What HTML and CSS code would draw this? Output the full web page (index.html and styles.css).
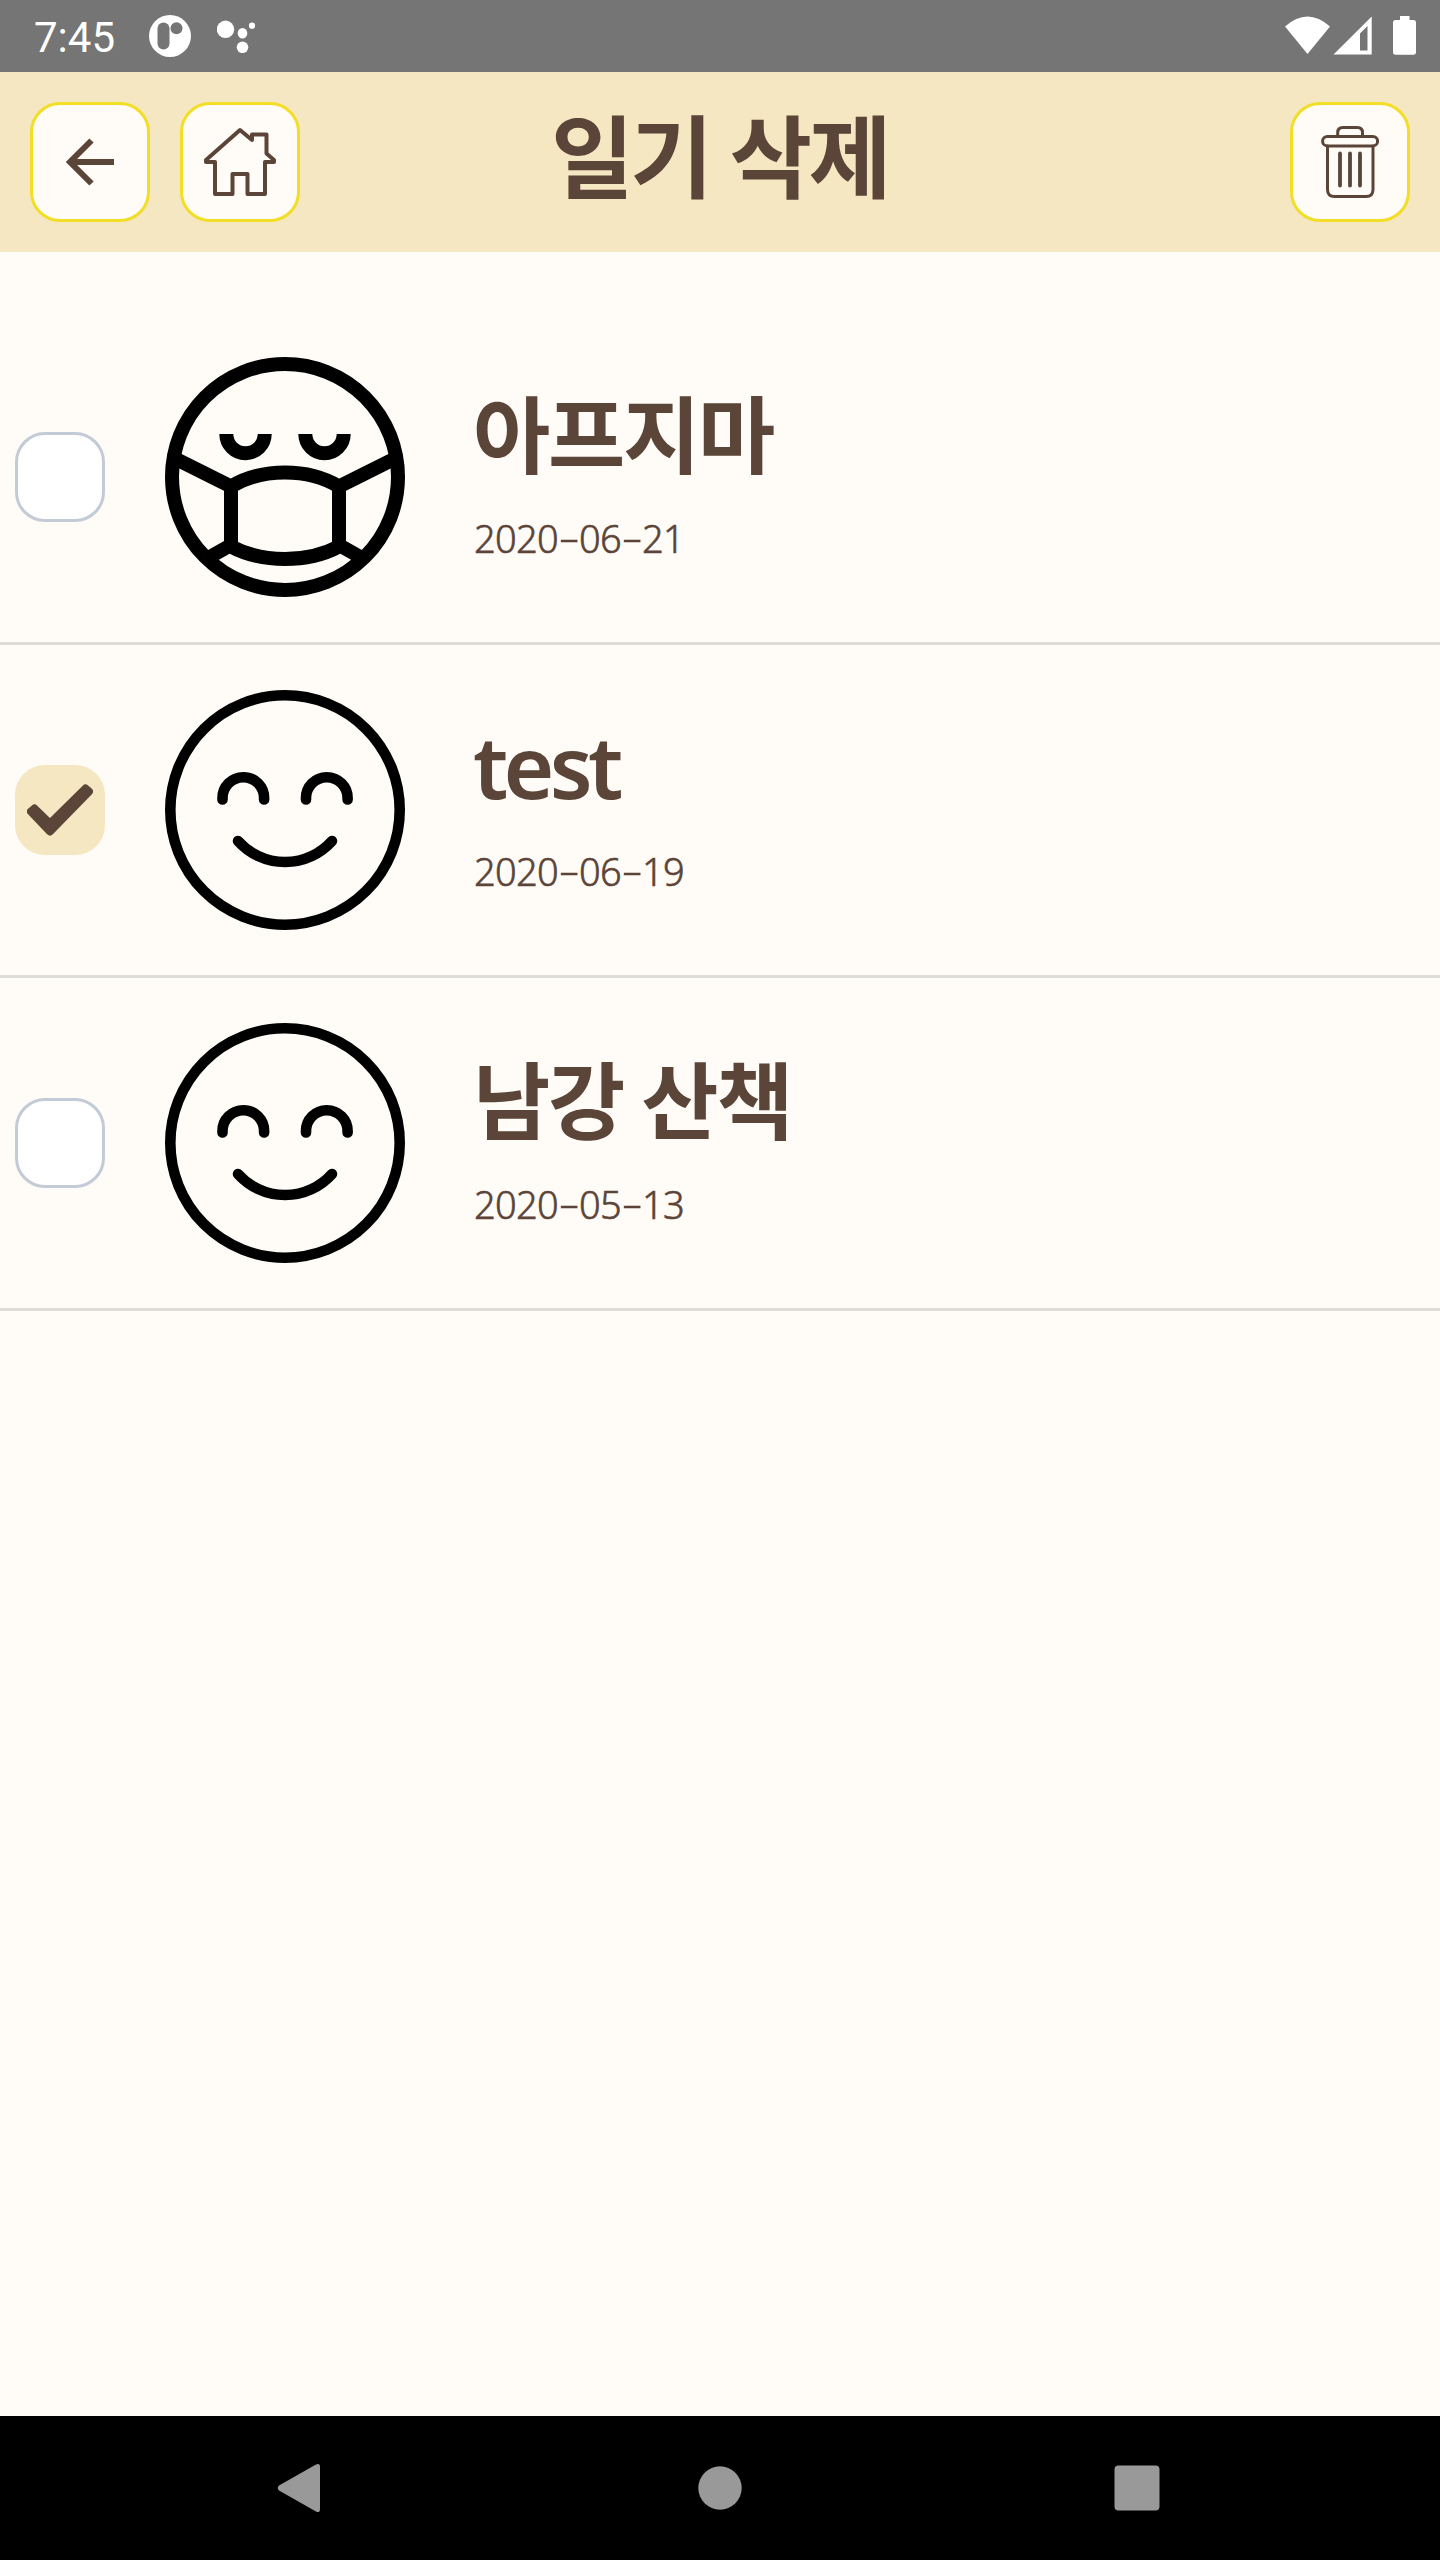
FILE: index.html
```html
<!DOCTYPE html>
<html lang="ko">
<head>
<meta charset="utf-8">
<title>일기 삭제</title>
<link rel="stylesheet" href="styles.css">
</head>
<body>
<div class="status-bar">
  <span class="clock">7:45</span>
  <svg class="status-app" width="42" height="42" viewBox="149 15 42 42"><circle cx="170" cy="36" r="21" fill="#fff"/><rect x="157.500" y="22.500" width="12" height="27" rx="6" fill="#757575"/><circle cx="176.500" cy="28.300" r="6" fill="#757575"/></svg>
  <svg class="status-dots" width="39" height="33" viewBox="217 20 39 33" fill="#fff"><circle cx="225.500" cy="29.300" r="8.700"/><ellipse cx="242.500" cy="33.200" rx="4.800" ry="5.200"/><circle cx="252" cy="25.700" r="3.100"/><circle cx="242.500" cy="47.300" r="5.800"/></svg>
  <svg class="status-system" width="132" height="40" viewBox="1284 15 132 40" fill="#fff"><path d="M1285 26.500Q1307.500 6.500 1330 26.500L1307.500 54Z"/><path fill-rule="evenodd" d="M1333.500 54.500L1371.700 16.500V54.500ZM1360 33.500V50.500H1367.500V26Z"/><path d="M1400 16H1409.500V20H1413.500Q1416 20 1416 22.500V52Q1416 54.800 1413.500 54.800H1395.500Q1393 54.800 1393 52V22.500Q1393 20 1395.500 20H1400Z"/></svg>
</div>
<header class="header">
  <button class="icon-button"><svg width="48" height="48" viewBox="66 138 48 48" fill="none" stroke="#5b4438" stroke-width="6"><path d="M114 162H71M91.500 140.500L70 162L91.500 183.500"/></svg></button>
  <button class="icon-button"><svg width="74" height="72" viewBox="203 126 74 72" fill="none" stroke="#5b4438" stroke-width="4" stroke-linejoin="round"><path d="M240 130L206 160V162H215V194H232.500V174H247.500V194H265V162H274V160L266.500 153.500V134.500H252V140Z"/></svg></button>
  <h1 class="title">일기 삭제</h1>
  <button class="icon-button"><svg width="58" height="72" viewBox="1321 126 58 72" fill="none" stroke="#5b4438" stroke-width="3" stroke-linecap="round"><path d="M1337.700 136V132.500Q1337.700 127.500 1342.700 127.500H1357.500Q1362.500 127.500 1362.500 132.500V136"/><rect x="1322.600" y="136.400" width="55" height="9.500" rx="4.750"/><path d="M1327.500 146V189.500Q1327.500 196.500 1334.500 196.500H1366Q1373 196.500 1373 189.500V146"/><path d="M1340 153.500V185.500M1350 153.500V185.500M1360 153.500V185.500" stroke-width="3.800"/></svg></button>
</header>
<main class="diary-list">
  <article class="entry">
    <span class="checkbox"></span>
    <svg class="face" viewBox="165 357 240 240" fill="none" stroke="#000" stroke-width="14"><circle cx="285" cy="477" r="113"/><path d="M226.300 434a19.200 19.200 0 0 0 38.400 0M305.300 434a19.200 19.200 0 0 0 38.400 0"/><path d="M231 486.500Q254.500 472.500 285 472.500T339 486.500V546.500Q315.500 559 285 559T231 546.500ZM231 486.500L178 460M339 486.500L392 460M231 545L208 558M339 545L362 558"/></svg>
    <div class="entry-text"><h2 class="entry-title">아프지마</h2><time class="date">2020<span class="dash">-</span>06<span class="dash">-</span>21</time></div>
  </article>
  <article class="entry">
    <span class="checkbox checked"><svg width="66" height="52" viewBox="27 784 66 52" fill="#5b4438" stroke="#5b4438" stroke-width="8" stroke-linejoin="round"><path d="M31 811.500L34.500 808.500L50 823.500L85.500 788.500L89 791.500L50 831.500Z"/></svg></span>
    <svg class="face" viewBox="165 690 240 240" fill="none" stroke="#000" stroke-width="10.600" stroke-linecap="round"><circle cx="285" cy="810" r="114.700"/><path d="M222.500 799.500V798a20.800 20.800 0 0 1 41.600 0v1.500M306 799.500V798a20.800 20.800 0 0 1 41.600 0v1.500M238 841A63 63 0 0 0 332 841"/></svg>
    <div class="entry-text"><h2 class="entry-title latin">test</h2><time class="date">2020<span class="dash">-</span>06<span class="dash">-</span>19</time></div>
  </article>
  <article class="entry">
    <span class="checkbox"></span>
    <svg class="face" viewBox="165 690 240 240" fill="none" stroke="#000" stroke-width="10.600" stroke-linecap="round"><circle cx="285" cy="810" r="114.700"/><path d="M222.500 799.500V798a20.800 20.800 0 0 1 41.600 0v1.500M306 799.500V798a20.800 20.800 0 0 1 41.600 0v1.500M238 841A63 63 0 0 0 332 841"/></svg>
    <div class="entry-text"><h2 class="entry-title">남강 산책</h2><time class="date">2020<span class="dash">-</span>05<span class="dash">-</span>13</time></div>
  </article>
</main>
<nav class="nav-bar">
  <svg width="44" height="50" viewBox="277 2463 44 50" fill="#999"><path d="M316 2464.500Q320 2462.500 320 2467V2509Q320 2513.500 316 2511.500L279 2490.500Q276.500 2488 279 2485.500Z"/></svg>
  <svg width="44" height="44" viewBox="0 0 44 44" fill="#999"><circle cx="22" cy="22" r="21.700"/></svg>
  <svg width="46" height="46" viewBox="0 0 46 46" fill="#999"><rect x=".5" y=".5" width="45" height="45" rx="4"/></svg>
</nav>
</body>
</html>
```
FILE: styles.css
```css
* { box-sizing: border-box; }
body {
  margin: 0;
  width: 1440px;
  height: 2560px;
  display: flex;
  flex-direction: column;
  background: #fffcf7;
  color: #5b4438;
  font-family: "Noto Sans CJK KR", sans-serif;
}
svg { display: block; flex: none; }
.status-bar {
  height: 72px;
  display: flex;
  align-items: flex-start;
  background: #757575;
  color: #fff;
}
.clock {
  width: 115px;
  margin-left: 34px;
  font: 400 42px/76px Roboto, sans-serif;
}
.status-app { margin-top: 15px; }
.status-dots { margin: 20px 0 0 26px; }
.status-system { margin: 15px 24px 0 auto; }
.header {
  height: 180px;
  padding: 0 30px;
  display: grid;
  grid-template-columns: 120px 120px 1fr 120px;
  column-gap: 30px;
  align-items: center;
  background: #f5e7c1;
}
.icon-button {
  width: 120px;
  height: 120px;
  padding: 0;
  display: flex;
  align-items: center;
  justify-content: center;
  border: 3px solid #f2de27;
  border-radius: 30px;
  background: #fffcf7;
}
.title {
  margin: 0 151px 20px 0;
  text-align: center;
  white-space: nowrap;
  font-size: 90px;
  line-height: 120px;
  font-weight: 700;
  letter-spacing: -3.5px;
  word-spacing: -2px;
}
.diary-list { flex: 1; padding-top: 60px; }
.entry {
  height: 333px;
  padding-left: 15px;
  display: flex;
  align-items: center;
  border-bottom: 3px solid #dfdcd7;
}
.checkbox {
  width: 90px;
  height: 90px;
  flex: none;
  display: flex;
  align-items: center;
  justify-content: center;
  border: 3px solid #c3cbd6;
  border-radius: 30px;
  background: #fff;
}
.checkbox.checked { border-color: #f5e7c1; background: #f5e7c1; }
.face { width: 240px; height: 240px; margin: 0 68px 0 60px; }
.entry-text { display: flex; flex-direction: column; gap: 16px; padding-bottom: 16px; }
.entry-title {
  margin: 0;
  height: 120px;
  font-size: 84px;
  line-height: 120px;
  font-weight: 700;
  letter-spacing: -2.3px;
  word-spacing: -3px;
  white-space: nowrap;
}
.entry-title.latin {
  font-family: "Noto Sans", sans-serif;
  font-size: 87px;
  line-height: 123px;
  font-weight: 600;
  letter-spacing: -4.7px;
}
.date {
  height: 60px;
  padding-left: 1px;
  font: 300 38px/62px "Noto Sans", sans-serif;
  letter-spacing: -0.7px;
  white-space: nowrap;
  -webkit-text-stroke: 0.6px currentColor;
}
.dash {
  display: inline-block;
  width: 21px;
  text-align: center;
  transform: translateY(-2px) scaleX(1.7);
}
.nav-bar {
  height: 144px;
  padding: 0 280px 0 277px;
  display: grid;
  grid-template-columns: 44px 1fr 46px;
  justify-items: center;
  align-items: center;
  background: #000;
}
.nav-bar svg:nth-child(2) { margin-left: 5px; }
```
